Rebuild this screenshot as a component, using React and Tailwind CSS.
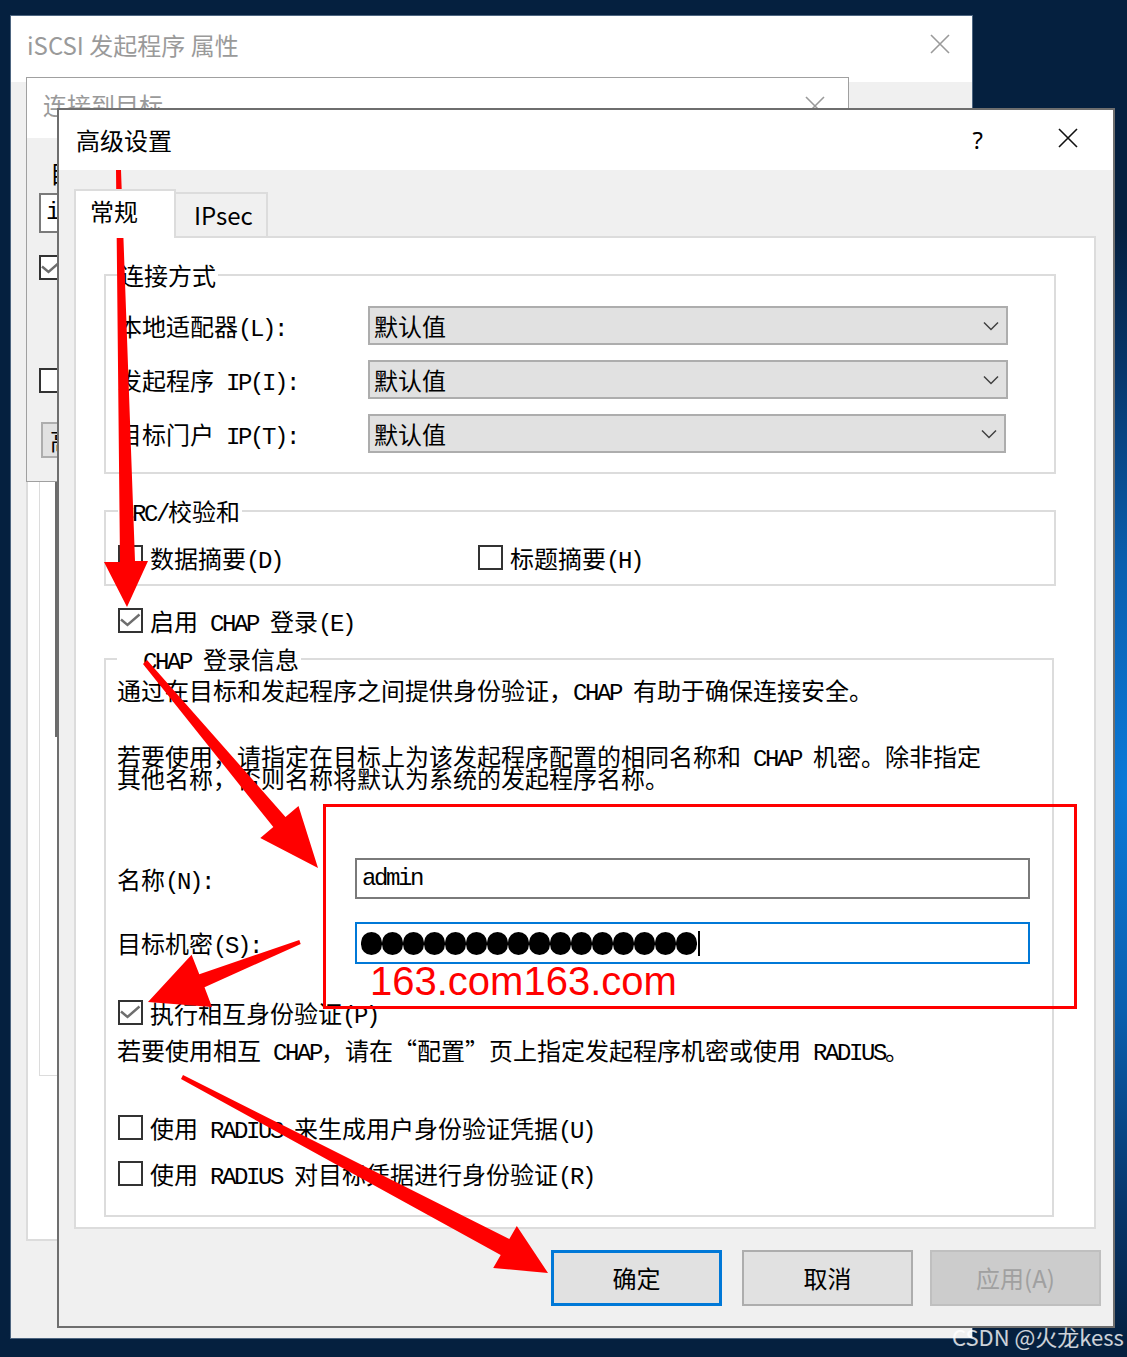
import React from "react";

const MONO = "font-['Liberation_Mono',monospace] text-[24px] tracking-[-2.4px] leading-[0] whitespace-pre";

function T({ s }) {
  const parts = s.split(/([\x20-\x7e]+)/);
  return (
    <>
      {parts.map((p, i) =>
        !p ? null : /^[\x20-\x7e]+$/.test(p) ? (
          <span key={i} className={MONO}>
            {p}
          </span>
        ) : (
          <span key={i}>{p}</span>
        )
      )}
    </>
  );
}

function Box({ checked, className = "" }) {
  return (
    <span className={"relative block h-[25px] w-[25px] shrink-0 border-2 border-[#333333] bg-white " + className}>
      {checked && (
        <svg className="absolute left-0 top-0" width="21" height="21" viewBox="0 0 21 21">
          <path d="M1 9.5 L7.5 15 L19.5 4.5" fill="none" stroke="#6e6e6e" strokeWidth="2.4" />
        </svg>
      )}
    </span>
  );
}

function X({ color, className = "" }) {
  return (
    <svg className={"shrink-0 " + className} width="20" height="20" viewBox="0 0 20 20">
      <path d="M1 1 L19 19 M19 1 L1 19" stroke={color} strokeWidth="1.6" fill="none" />
    </svg>
  );
}

function Combo({ mr }) {
  return (
    <div className={"flex h-[39px] flex-1 items-center border-2 border-[#adadad] bg-[#e1e1e1] pl-[4px] pr-[7px] " + mr}>
      <span>默认值</span>
      <svg className="ml-auto" width="16" height="10" viewBox="0 0 16 10">
        <path d="M1 1.5 L8 8.5 L15 1.5" fill="none" stroke="#404040" strokeWidth="1.5" />
      </svg>
    </div>
  );
}

function Check({ checked, label, className = "" }) {
  return (
    <div className={"flex items-center " + className}>
      <Box checked={checked} />
      {label && (
        <span className="ml-[7px] whitespace-nowrap">
          <T s={label} />
        </span>
      )}
    </div>
  );
}

export default function App() {
  const dots = Array.from({ length: 16 });
  return (
    <div className="relative h-[1357px] w-[1127px] overflow-hidden bg-[#05203f] bg-[radial-gradient(170px_560px_at_100%_58%,#0b7ad8_0%,#0a5fae_40%,#07366a_75%,#05203f_100%)] font-['Noto_Sans_CJK_SC',sans-serif] text-[24px] leading-[24px] text-black">
      {/* Window 1: iSCSI 发起程序 属性 */}
      <div className="absolute left-[10px] top-[15px] flex h-[1324px] w-[963px] flex-col border border-[#4d6580] bg-[#f0f0f0]">
        <div className="flex h-[66px] shrink-0 items-start bg-white">
          <span className="ml-[16px] mt-[17px] whitespace-nowrap text-[#9a9a9a]">iSCSI 发起程序 属性</span>
          <X color="#9a9a9a" className="ml-auto mr-[22px] mt-[18px]" />
        </div>
        <div className="relative flex-1">
          <div className="ml-[15px] mt-[58px] h-[1101px] w-[900px] border-2 border-[#dcdcdc] bg-white pl-[11px] pt-[300px]">
            <div className="h-[634px] w-[800px] border border-[#dcdcdc] bg-white" />
          </div>
          <div className="absolute left-[44px] top-[399px] h-[256px] w-[3px] bg-[#6b6b6b]" />
        </div>
      </div>

      {/* Window 2: 连接到目标 */}
      <div className="absolute left-[26px] top-[77px] flex h-[405px] w-[823px] flex-col border border-[#a0a0a0] bg-[#f0f0f0]">
        <div className="flex h-[60px] shrink-0 items-start bg-white">
          <span className="ml-[16px] mt-[15px] text-[#9a9a9a]">连接到目标</span>
          <X color="#9a9a9a" className="ml-auto mr-[23px] mt-[18px]" />
        </div>
        <div className="flex flex-col items-start pl-[12px]">
          <div className="ml-[11px] mt-[23px]">目</div>
          <div className="mt-[8px] flex h-[40px] w-[700px] items-center border-2 border-[#7a7a7a] bg-white pl-[5px]">
            <span className={MONO}>i</span>
          </div>
          <Check checked className="mt-[22px]" />
          <Check className="mt-[88px]" />
          <div className="ml-[2px] mt-[29px] flex h-[36px] w-[200px] items-center border-2 border-[#adadad] bg-[#e1e1e1] pl-[7px]">
            高
          </div>
        </div>
      </div>

      {/* Window 3: 高级设置 */}
      <div className="absolute left-[57px] top-[108px] flex h-[1220px] w-[1058px] flex-col border-2 border-[#6e6e6e] bg-[#f0f0f0]">
        <div className="flex h-[60px] shrink-0 items-center bg-white">
          <span className="ml-[17px]">高级设置</span>
          <span className="ml-auto font-['Noto_Sans',sans-serif] leading-none">?</span>
          <X color="#111111" className="ml-[75px] mr-[35px] -mt-[4px]" />
        </div>
        <div className="flex flex-1 flex-col pl-[15px] pr-[17px] pt-[19px]">
          {/* tabs */}
          <div className="flex h-[47px] items-start">
            <div className="relative z-10 h-[49px] w-[102px] border-2 border-b-0 border-[#dcdcdc] bg-white pl-[14px] pt-[8px]">
              常规
            </div>
            <div className="mt-[3px] h-[44px] w-[92px] border-2 border-b-0 border-l-0 border-[#dcdcdc] bg-[#f0f0f0] pl-[18px] pt-[9px]">
              IPsec
            </div>
          </div>
          {/* panel */}
          <div className="flex h-[993px] flex-col border-2 border-[#dcdcdc] bg-white">
            <fieldset className="ml-[28px] mr-[38px] mt-[25px] border-2 border-[#dcdcdc] pb-[19px] pl-[12px] pt-[19px]">
              <legend className="px-[2px] leading-[24px]">连接方式</legend>
              <div className="flex flex-col gap-[15px]">
                <div className="flex h-[39px] items-center">
                  <div className="w-[250px] whitespace-nowrap">
                    <T s="本地适配器(L):" />
                  </div>
                  <Combo mr="mr-[46px]" />
                </div>
                <div className="flex h-[39px] items-center">
                  <div className="w-[250px] whitespace-nowrap">
                    <T s="发起程序 IP(I):" />
                  </div>
                  <Combo mr="mr-[46px]" />
                </div>
                <div className="flex h-[39px] items-center">
                  <div className="w-[250px] whitespace-nowrap">
                    <T s="目标门户 IP(T):" />
                  </div>
                  <Combo mr="mr-[48px]" />
                </div>
              </div>
            </fieldset>

            <fieldset className="ml-[28px] mr-[38px] mt-[25px] border-2 border-[#dcdcdc] pb-[14px] pl-[12px] pt-[22px]">
              <legend className="px-[2px] leading-[24px]">
                <T s="CRC/校验和" />
              </legend>
              <div className="flex">
                <Check label="数据摘要(D)" className="w-[360px]" />
                <Check label="标题摘要(H)" />
              </div>
            </fieldset>

            <Check checked label="启用 CHAP 登录(E)" className="ml-[42px] mt-[22px]" />

            <fieldset className="ml-[28px] mr-[40px] mt-[14px] border-2 border-[#dcdcdc] pb-[29px] pl-[11px] pt-[7px]">
              <legend className="px-[2px] leading-[24px]">
                <T s="  CHAP 登录信息" />
              </legend>
              <div className="whitespace-nowrap">
                <T s="通过在目标和发起程序之间提供身份验证，CHAP 有助于确保连接安全。" />
              </div>
              <div className="mt-[43px] leading-[22px]">
                <div className="whitespace-nowrap">
                  <T s="若要使用，请指定在目标上为该发起程序配置的相同名称和 CHAP 机密。除非指定" />
                </div>
                <div className="whitespace-nowrap">
                  <T s="其他名称，否则名称将默认为系统的发起程序名称。" />
                </div>
              </div>
              <div className="mt-[69px] flex h-[41px] items-center">
                <div className="w-[238px] whitespace-nowrap">
                  <T s="名称(N):" />
                </div>
                <div className="mr-[22px] flex h-full flex-1 items-center border-2 border-[#7a7a7a] bg-white pl-[5px]">
                  <span className={MONO}>admin</span>
                </div>
              </div>
              <div className="mt-[23px] flex h-[42px] items-center">
                <div className="w-[238px] whitespace-nowrap">
                  <T s="目标机密(S):" />
                </div>
                <div className="mr-[22px] flex h-full flex-1 items-center border-2 border-[#0078d7] bg-white pl-[4px]">
                  {dots.map((_, i) => (
                    <span key={i} className="block h-[23px] w-[21px] shrink-0 rounded-full bg-black" />
                  ))}
                  <span className="ml-[1px] block h-[25px] w-[2px] bg-black" />
                </div>
              </div>
              <Check checked label="执行相互身份验证(P)" className="ml-[1px] mt-[36px]" />
              <div className="mt-[13px] whitespace-nowrap">
                <T s="若要使用相互 CHAP，请在“配置”页上指定发起程序机密或使用 RADIUS。" />
              </div>
              <Check label="使用 RADIUS 来生成用户身份验证凭据(U)" className="ml-[1px] mt-[53px]" />
              <Check label="使用 RADIUS 对目标凭据进行身份验证(R)" className="ml-[1px] mt-[21px]" />
            </fieldset>
          </div>
          {/* buttons */}
          <div className="-mr-[5px] mt-[21px] flex justify-end">
            <div className="flex h-[56px] w-[171px] items-center justify-center border-[3px] border-[#0078d7] bg-[#e1e1e1]">确定</div>
            <div className="ml-[20px] flex h-[56px] w-[171px] items-center justify-center border-2 border-[#adadad] bg-[#e1e1e1]">取消</div>
            <div className="ml-[17px] flex h-[56px] w-[171px] items-center justify-center border-2 border-[#bfbfbf] bg-[#cccccc] text-[#a0a0a0]">应用(A)</div>
          </div>
        </div>
      </div>

      {/* annotations */}
      <div className="absolute left-[323px] top-[804px] h-[205px] w-[754px] border-[3px] border-[#ff0000]" />
      <div className="absolute left-[370px] top-[961px] font-['Liberation_Sans',sans-serif] text-[40px] leading-[40px] text-[#ff0000]">
        163.com163.com
      </div>
      <svg className="pointer-events-none absolute left-0 top-0" width="1127" height="1357" viewBox="0 0 1127 1357">
        <polygon fill="#ff0000" points="116,170 121,170 135,561 148,561 127,607 104,562 120,562" />
        <polygon
          fill="#ff0000"
          points="147,660 285.5,816.9 298.5,805.9 318,868 260.3,838.1 273.3,827.1 143,664"
        />
        <polygon
          fill="#ff0000"
          points="299.3,940.1 199.3,974.2 191.6,954.7 148,1002 212,1007 204.5,987.2 300.7,943.9"
        />
        <polygon
          fill="#ff0000"
          points="183,1075 509.3,1239 516.8,1226 548,1273 493.2,1268 500.7,1255 181,1079"
        />
      </svg>
      <div className="absolute left-[952px] top-[1324px] whitespace-nowrap text-[22px] leading-[24px] text-white/80">
        CSDN @火龙kess
      </div>
    </div>
  );
}
